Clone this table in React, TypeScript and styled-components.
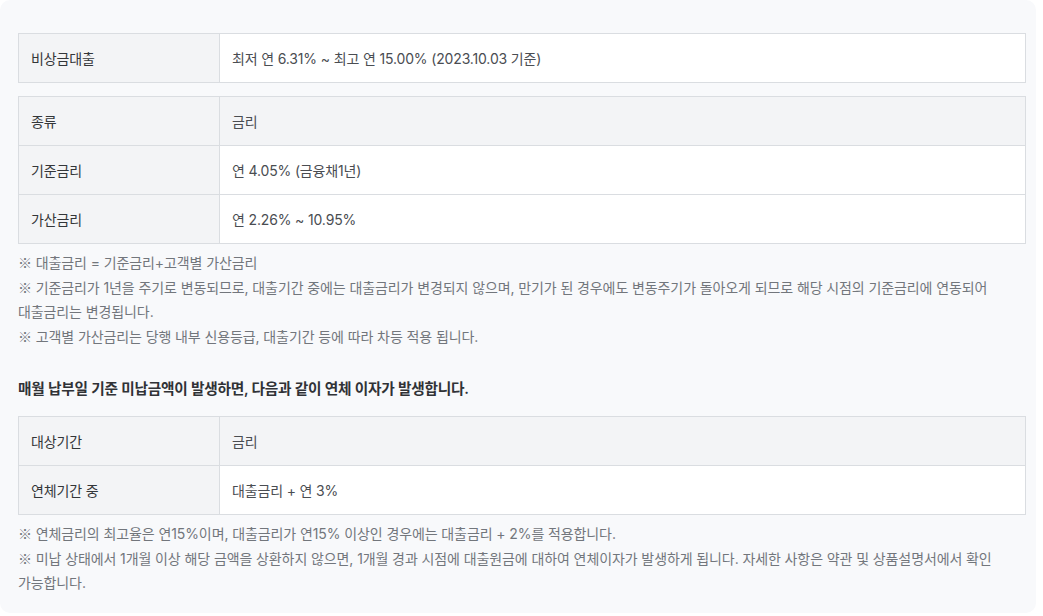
import React from "react";
import styled, { createGlobalStyle } from "styled-components";

const Global = createGlobalStyle`
  html, body { margin: 0; padding: 0; background: #ffffff; }
  body { font-family: "Inter", "Noto Sans CJK KR", "Noto Sans", sans-serif; }
  * { box-sizing: border-box; }
`;

const Panel = styled.div`
  width: 1036px;
  height: 613px;
  background: #f8f9fb;
  border-radius: 10px;
  padding: 33px 10px 0 18px;
  display: flex;
  flex-direction: column;
`;

const Table = styled.div<{ $mt?: number }>`
  display: grid;
  grid-template-columns: 201px 1fr;
  border: 1px solid #dadde1;
  margin-top: ${(p) => p.$mt ?? 0}px;
  & > div:nth-last-child(-n + 2) { border-bottom: none; height: 48px; }
`;

const Cell = styled.div<{ $head?: boolean; $label?: boolean }>`
  height: 49px;
  display: flex;
  align-items: center;
  padding-left: 12px;
  font-size: 14px;
  letter-spacing: -0.15px;
  background: ${(p) => (p.$head || p.$label ? "#f3f4f6" : "#ffffff")};
  color: ${(p) => (p.$label ? "#333639" : "#4a4d52")};
  border-bottom: 1px solid #dadde1;
  border-right: ${(p) => (p.$label ? "1px solid #dadde1" : "none")};
`;

const Notes = styled.div<{ $mt: number }>`
  margin-top: ${(p) => p.$mt}px;
  font-size: 14px;
  line-height: 24px;
  color: #72767c;
  letter-spacing: -0.1px;
`;

const Mark = styled.span`
  font-family: "Noto Sans CJK KR", sans-serif;
`;

const Heading = styled.div`
  margin-top: 28px;
  font-size: 14.7px;
  font-weight: 600;
  color: #303236;
  letter-spacing: -0.25px;
  line-height: 24px;
`;

export default function App() {
  return (
    <>
      <Global />
      <Panel>
        <Table>
          <Cell $label>비상금대출</Cell>
          <Cell>최저 연 6.31% ~ 최고 연 15.00% (2023.10.03 기준)</Cell>
        </Table>
        <Table $mt={13}>
          <Cell $label $head>종류</Cell>
          <Cell $head>금리</Cell>
          <Cell $label>기준금리</Cell>
          <Cell>연 4.05% (금융채1년)</Cell>
          <Cell $label>가산금리</Cell>
          <Cell>연 2.26% ~ 10.95%</Cell>
        </Table>
        <Notes $mt={6}>
          <div><Mark>※</Mark> 대출금리 = 기준금리+고객별 가산금리</div>
          <div>
            <Mark>※</Mark> 기준금리가 1년을 주기로 변동되므로, 대출기간 중에는 대출금리가 변경되지 않으며, 만기가 된 경우에도 변동주기가 돌아오게 되므로 해당 시점의 기준금리에 연동되어
            <br />
            대출금리는 변경됩니다.
          </div>
          <div><Mark>※</Mark> 고객별 가산금리는 당행 내부 신용등급, 대출기간 등에 따라 차등 적용 됩니다.</div>
        </Notes>
        <Heading>매월 납부일 기준 미납금액이 발생하면, 다음과 같이 연체 이자가 발생합니다.</Heading>
        <Table $mt={15}>
          <Cell $label $head>대상기간</Cell>
          <Cell $head>금리</Cell>
          <Cell $label>연체기간 중</Cell>
          <Cell>대출금리 + 연 3%</Cell>
        </Table>
        <Notes $mt={6}>
          <div><Mark>※</Mark> 연체금리의 최고율은 연15%이며, 대출금리가 연15% 이상인 경우에는 대출금리 + 2%를 적용합니다.</div>
          <div>
            <Mark>※</Mark> 미납 상태에서 1개월 이상 해당 금액을 상환하지 않으면, 1개월 경과 시점에 대출원금에 대하여 연체이자가 발생하게 됩니다. 자세한 사항은 약관 및 상품설명서에서 확인
            <br />
            가능합니다.
          </div>
        </Notes>
      </Panel>
    </>
  );
}
